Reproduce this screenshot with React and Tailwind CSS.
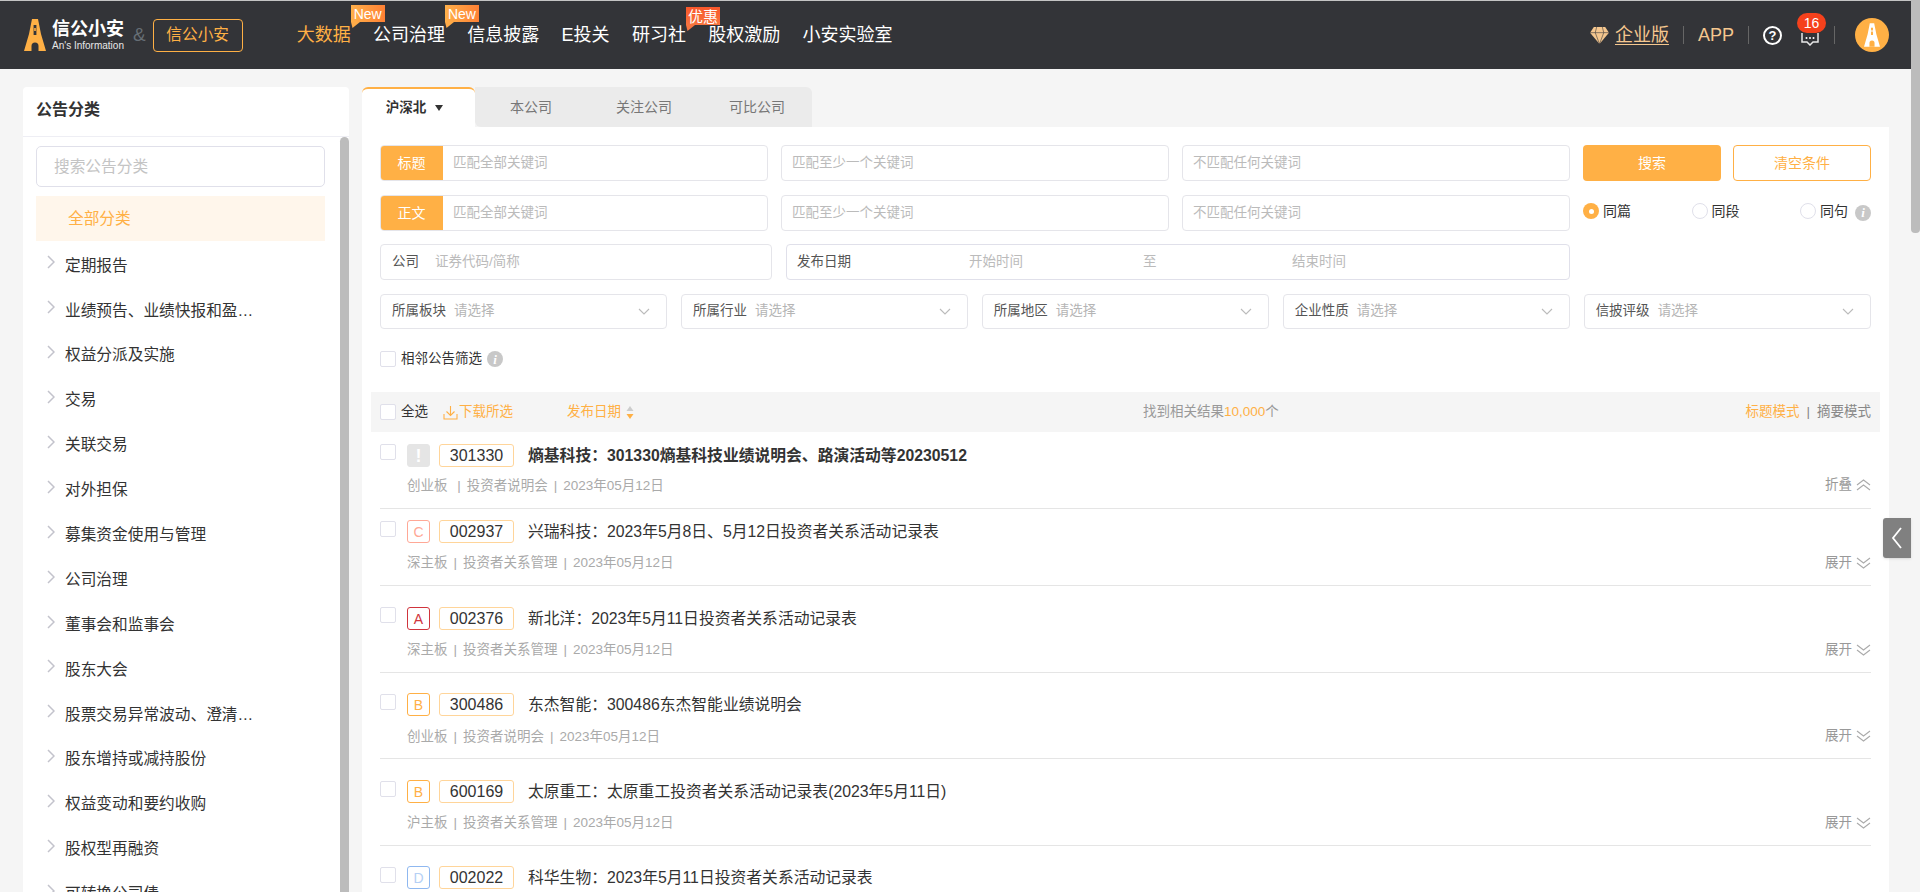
import React from "react";

function Logo({ className, fill = "#ffb045", cut = "#333438" }) {
  return (
    <svg viewBox="0 0 22 32" className={className}>
      <path fill={fill} d="M8 0h6l.8 4 2.2 11 5 17H0L5 15 7.2 4z" />
      <rect x="9.6" y="6" width="2.8" height="10" fill={cut} />
      <rect x="10.2" y="9" width="1.6" height="3" fill={fill} />
      <path fill={cut} d="M7.5 32v-5a3.5 3.5 0 0 1 7 0v5z" />
    </svg>
  );
}

function Badge({ children, red }) {
  return (
    <span
      className={`absolute right-[-34px] flex w-[34px] items-center justify-center leading-none text-white ${
        red
          ? "top-[-16px] h-[18px] bg-gradient-to-b from-[#f9572b] to-[#f8743f] text-[15px]"
          : "top-[-18px] h-[17px] bg-gradient-to-r from-[#ffb04a] to-[#ff8034] text-[14px]"
      }`}
    >
      {children}
      <svg viewBox="0 0 9 6" className="absolute bottom-[-6px] left-0 h-[6px] w-[9px]">
        <path d="M0 0h9L1.5 6z" fill={red ? "#f8743f" : "#ffab48"} />
      </svg>
    </span>
  );
}

function Nav() {
  const items = [
    ["大数据", "New"],
    ["公司治理", "New"],
    ["信息披露"],
    ["E投关"],
    ["研习社", "优惠"],
    ["股权激励"],
    ["小安实验室"],
  ];
  return (
    <nav className="ml-[54px] flex gap-[22.3px] text-[18px] leading-[24px]">
      {items.map(([t, b], i) => (
        <span key={t} className={`relative whitespace-nowrap ${i === 0 ? "text-[#ffb045]" : "text-white"}`}>
          {t}
          {b && <Badge red={b === "优惠"}>{b}</Badge>}
        </span>
      ))}
    </nav>
  );
}

function Header() {
  return (
    <header className="flex h-[69px] items-center border-t border-t-[#c4c4c4] bg-[#333438] pl-[24px] pr-[31px]">
      <Logo className="h-[32px] w-[22px] shrink-0" />
      <div className="ml-[6px] flex w-[73px] flex-col text-white">
        <span className="text-[18px] font-bold leading-[20px]">信公小安</span>
        <span className="mt-[1px] whitespace-nowrap text-[10px] leading-[11px] text-[#e8e8e8]">An's Information</span>
      </div>
      <span className="ml-[8px] text-[19px] text-[#666e75]">&amp;</span>
      <span className="ml-[7px] flex h-[33px] w-[90px] items-center justify-center rounded-[4px] border border-[#ffb045] text-[15.7px] text-[#ffb045]">
        信公小安
      </span>
      <Nav />
      <div className="ml-auto flex items-center text-[18px] text-[#f5c78f]">
        <svg viewBox="0 0 20 18" className="mr-[6px] h-[17px] w-[19px]">
          <path fill="#f5c78f" d="M4 0h12l4 6-10 12L0 6z" />
          <path fill="none" stroke="#333438" strokeWidth="0.6" d="M0 6h20M7 0 5.5 6 10 18l4.5-12L13 0" />
        </svg>
        <span className="underline underline-offset-[3px]">企业版</span>
        <span className="mx-[14px] h-[18px] w-px bg-[#666]" />
        <span>APP</span>
        <span className="mx-[14px] h-[18px] w-px bg-[#666]" />
        <span className="flex h-[19px] w-[19px] items-center justify-center rounded-full border-[2px] border-white text-[13px] font-bold leading-none text-white">?</span>
        <span className="relative ml-[19px] mt-[6px] block h-[13px] w-[18px]">
          <svg viewBox="0 0 18 14" className="h-[14px] w-[18px]">
            <path fill="none" stroke="#e8e8e8" strokeWidth="1.5" d="M1 1v9h5l3 3 3-3h5V1" />
            <circle cx="5.5" cy="6" r="1" fill="#fff" />
            <circle cx="9" cy="6" r="1" fill="#fff" />
            <circle cx="12.5" cy="6" r="1" fill="#fff" />
          </svg>
          <span className="absolute left-[-4px] top-[-19px] flex h-[20px] w-[29px] items-center justify-center rounded-full bg-[#f5411c] text-[14px] leading-none text-white">16</span>
        </span>
        <span className="ml-[15px] h-[18px] w-px bg-[#666]" />
        <span className="ml-[20px] flex h-[34px] w-[34px] items-center justify-center rounded-full bg-[#ffb045]">
          <Logo className="h-[24px] w-[16px]" fill="#fff" cut="#ffb045" />
        </span>
      </div>
    </header>
  );
}

const cats = [
  "定期报告",
  "业绩预告、业绩快报和盈…",
  "权益分派及实施",
  "交易",
  "关联交易",
  "对外担保",
  "募集资金使用与管理",
  "公司治理",
  "董事会和监事会",
  "股东大会",
  "股票交易异常波动、澄清…",
  "股东增持或减持股份",
  "权益变动和要约收购",
  "股权型再融资",
  "可转换公司债",
];

function Sidebar() {
  return (
    <aside className="ml-[23px] flex w-[326px] shrink-0 flex-col rounded-t-[4px] bg-white">
      <div className="flex h-[50px] shrink-0 items-center border-b border-[#eeeef4] pb-[3px] pl-[13px] text-[16px] font-bold leading-none text-[#333]">
        公告分类
      </div>
      <div className="relative flex-1 overflow-hidden pl-[13px] pr-[24px]">
        <span className="absolute bottom-0 right-0 top-0 w-[9px] rounded-t-[5px] bg-[#bcbcbc]" />
        <div className="mt-[9px] flex h-[41px] items-center rounded-[5px] border border-[#e0e0ea] pl-[17px] text-[15.7px] text-[#c4c4c4]">
          搜索公告分类
        </div>
        <div className="mt-[9px] flex h-[45px] items-center bg-[#fff6eb] pl-[32px] text-[15.7px] text-[#ffb045]">全部分类</div>
        <ul className="mt-[2px] text-[#333]">
          {cats.map((c) => (
            <li key={c} className="flex h-[44.9px] items-center pl-[11px] text-[15.7px]">
              <svg viewBox="0 0 8 14" className="mb-[6px] h-[14px] w-[8px] shrink-0" fill="none" stroke="#c3c3cc" strokeWidth="1.5">
                <path d="M1 1l6 6-6 6" />
              </svg>
              <span className="ml-[10px] whitespace-nowrap">{c}</span>
            </li>
          ))}
        </ul>
      </div>
    </aside>
  );
}

function Field({ text, className = "" }) {
  return (
    <div className={`flex h-[36px] items-center rounded-[4px] border border-[#e5e5ea] pl-[10px] text-[13.5px] text-[#bbb] ${className}`}>
      {text}
    </div>
  );
}

function Labeled({ label }) {
  return (
    <div className="flex h-[36px] w-[388px] overflow-hidden rounded-[4px] border border-[#e5e5ea]">
      <span className="-my-px -ml-px flex w-[63px] items-center justify-center rounded-l-[4px] bg-[#ffb045] text-[14px] text-white">{label}</span>
      <span className="ml-[10px] flex items-center text-[13.5px] text-[#bbb]">匹配全部关键词</span>
    </div>
  );
}

function Radio({ text, on, className = "" }) {
  return (
    <span className={`flex items-center whitespace-nowrap text-[14px] text-[#333] ${className}`}>
      {on ? (
        <span className="mr-[4px] flex h-[16px] w-[16px] items-center justify-center rounded-full bg-[#ffb045]">
          <span className="h-[5px] w-[5px] rounded-full bg-white" />
        </span>
      ) : (
        <span className="mr-[4px] h-[16px] w-[16px] rounded-full border border-[#e0e0ea]" />
      )}
      {text}
    </span>
  );
}

function Info({ className = "" }) {
  return (
    <span className={`flex h-[16px] w-[16px] shrink-0 items-center justify-center rounded-full bg-[#c8c8c8] font-[Liberation_Serif,serif] text-[13px] font-bold italic leading-none text-white ${className}`}>
      i
    </span>
  );
}

function Select({ label }) {
  return (
    <div className="flex h-[35px] flex-1 items-center rounded-[4px] border border-[#e5e5ea] pl-[11px] pr-[16px] text-[13.5px]">
      <span className="text-[#555]">{label}</span>
      <span className="ml-[8px] text-[#b5b5b5]">请选择</span>
      <svg viewBox="0 0 12 7" className="ml-auto h-[7px] w-[12px]" fill="none" stroke="#bbb" strokeWidth="1.1">
        <path d="M1 1l5 5 5-5" />
      </svg>
    </div>
  );
}

function Filters() {
  return (
    <div className="px-[18px] pt-[18px]">
      <div className="flex gap-[13px]">
        <Labeled label="标题" />
        <Field text="匹配至少一个关键词" className="w-[388px]" />
        <Field text="不匹配任何关键词" className="w-[388px]" />
        <button className="h-[36px] w-[138px] rounded-[4px] bg-[#ffb045] text-[14px] text-white">搜索</button>
        <button className="-ml-px h-[36px] w-[138px] rounded-[4px] border border-[#ffb045] text-[14px] text-[#ffb045]">清空条件</button>
      </div>
      <div className="mt-[14px] flex gap-[13px]">
        <Labeled label="正文" />
        <Field text="匹配至少一个关键词" className="w-[388px]" />
        <Field text="不匹配任何关键词" className="w-[388px]" />
        <div className="flex h-[36px] w-[288px] items-center pb-[4px]">
          <Radio text="同篇" on className="w-[109px]" />
          <Radio text="同段" className="w-[109px]" />
          <Radio text="同句" />
          <Info className="ml-[7px] mt-[3px]" />
        </div>
      </div>
      <div className="mt-[13px] flex gap-[14px]">
        <div className="flex h-[36px] w-[392px] items-center rounded-[4px] border border-[#e5e5ea] pl-[11px] text-[13.5px]">
          <span className="text-[#555]">公司</span>
          <span className="ml-[16px] text-[#bbb]">证券代码/简称</span>
        </div>
        <div className="relative flex h-[36px] w-[784px] items-center rounded-[4px] border border-[#e0e0ea] pl-[10px] text-[13.5px] text-[#bbb]">
          <span className="text-[#555]">发布日期</span>
          <span className="absolute left-[182px]">开始时间</span>
          <span className="absolute left-[356px]">至</span>
          <span className="absolute left-[505px]">结束时间</span>
        </div>
      </div>
      <div className="mt-[14px] flex gap-[13.5px]">
        {["所属板块", "所属行业", "所属地区", "企业性质", "信披评级"].map((l) => (
          <Select key={l} label={l} />
        ))}
      </div>
      <div className="mt-[20px] flex h-[20px] items-center text-[13.5px] text-[#333]">
        <span className="h-[16px] w-[16px] rounded-[2px] border border-[#e0e0ea]" />
        <span className="ml-[5px]">相邻公告筛选</span>
        <Info className="ml-[5px]" />
      </div>
    </div>
  );
}

function Toolbar() {
  return (
    <div className="relative mx-[9px] mt-[23px] flex h-[40px] items-center bg-[#f5f5f5] px-[9px] text-[13.5px]">
      <span className="h-[16px] w-[16px] rounded-[2px] border border-[#e0e0ea] bg-white" />
      <span className="ml-[5px] text-[#333]">全选</span>
      <svg viewBox="0 0 15 15" className="ml-[15px] h-[15px] w-[15px]" fill="none" stroke="#ffb045" strokeWidth="1.1">
        <path d="M7.5 1v9M3.5 6.5l4 4 4-4M1 9v5h13V9" />
      </svg>
      <span className="ml-px text-[#ffb045]">下载所选</span>
      <span className="ml-[54px] text-[#ffb045]">发布日期</span>
      <svg viewBox="0 0 8 13" className="ml-[5px] h-[13px] w-[8px]">
        <path d="M4 0l3.5 5h-7z" fill="#ccc" />
        <path d="M4 13l3.5-5h-7z" fill="#ffb045" />
      </svg>
      <span className="absolute left-[772px] text-[#999]">
        找到相关结果<span className="text-[#ffb045]">10,000</span>个
      </span>
      <span className="ml-auto text-[#ffb045]">标题模式</span>
      <span className="mx-[7px] text-[#888]">|</span>
      <span className="text-[#888]">摘要模式</span>
    </div>
  );
}

const rows = [
  { g: "!", gc: "border-[#e5e5e5] bg-[#e5e5e5] text-[18px] font-bold text-white", code: "301330", t: "熵基科技：301330熵基科技业绩说明会、路演活动等20230512", m: ["创业板 ", "投资者说明会", "2023年05月12日"], bold: true, h: "h-[77px]", pt: "pt-[12px]", mt: "mt-[8px]", cm: "mt-0" },
  { g: "C", gc: "border-[#ffa896] text-[#ffa896]", code: "002937", t: "兴瑞科技：2023年5月8日、5月12日投资者关系活动记录表", m: ["深主板", "投资者关系管理", "2023年05月12日"], h: "h-[77px]", pt: "pt-[11px]", mt: "mt-[9px]", cm: "mt-[1px]" },
  { g: "A", gc: "border-[#d0343c] text-[#d0343c]", code: "002376", t: "新北洋：2023年5月11日投资者关系活动记录表", m: ["深主板", "投资者关系管理", "2023年05月12日"], h: "h-[87px]", pt: "pt-[21px]", mt: "mt-[9px]", cm: "mt-0" },
  { g: "B", gc: "border-[#ffb045] text-[#ffb045]", code: "300486", t: "东杰智能：300486东杰智能业绩说明会", m: ["创业板", "投资者说明会", "2023年05月12日"], h: "h-[86px]", pt: "pt-[20px]", mt: "mt-[10px]", cm: "mt-[1px]" },
  { g: "B", gc: "border-[#ffb045] text-[#ffb045]", code: "600169", t: "太原重工：太原重工投资者关系活动记录表(2023年5月11日)", m: ["沪主板", "投资者关系管理", "2023年05月12日"], h: "h-[87px]", pt: "pt-[21px]", mt: "mt-[9px]", cm: "mt-[1px]" },
  { g: "D", gc: "border-[#8fb8f0] text-[#b5d0f5]", code: "002022", t: "科华生物：2023年5月11日投资者关系活动记录表", m: null, h: "h-[87px]", pt: "pt-[20px]", mt: "mt-[8px]", cm: "mt-[1px]" },
];

function Row({ r, i }) {
  return (
    <div className={`relative mx-[18px] ${r.h} ${r.pt} border-b border-[#e5e5e5] last:border-b-0`}>
      <div className="flex items-start">
        <span className={`${r.cm} h-[16px] w-[16px] rounded-[2px] border border-[#e0e0ea]`} />
        <span className={`ml-[11px] flex h-[23px] w-[23px] items-center justify-center rounded-[3px] border text-[14px] leading-none ${r.gc}`}>{r.g}</span>
        <span className="ml-[9px] flex h-[23px] w-[75px] items-center justify-center rounded-[3px] border border-[#ffd59a] text-[16px] leading-none text-[#333]">{r.code}</span>
        <span className={`ml-[14px] text-[15.8px] leading-[24px] text-[#333] ${r.bold ? "font-bold" : ""}`}>{r.t}</span>
      </div>
      {r.m && (
        <div className={`${r.mt} ml-[27px] flex whitespace-pre text-[13.5px] leading-[20px] text-[#aaa]`}>
          <span>{r.m[0]}</span>
          <span className="mx-[6px]">|</span>
          <span>{r.m[1]}</span>
          <span className="mx-[6px]">|</span>
          <span>{r.m[2]}</span>
        </div>
      )}
      {r.m && (
        <div className={`absolute right-0 flex items-center text-[13.5px] leading-[20px] text-[#999] ${i === 0 ? "bottom-[13px]" : "bottom-[12px]"}`}>
          {i === 0 ? "折叠" : "展开"}
          <svg viewBox="0 0 15 12" className="ml-[4px] h-[12px] w-[15px]" fill="none" stroke="#aaa" strokeWidth="1.1">
            {i === 0 ? <path d="M1 6l6.5-5L14 6M1 11l6.5-5 6.5 5" /> : <path d="M1 1l6.5 5L14 1M1 6l6.5 5L14 6" />}
          </svg>
        </div>
      )}
    </div>
  );
}

function Main() {
  return (
    <main className="ml-[13px] flex w-[1527px] shrink-0 flex-col">
      <div className="flex h-[40px] shrink-0 text-[14px]">
        <div className="flex w-[113px] items-center justify-center rounded-t-[6px] border-t-2 border-[#ffb045] bg-white pr-[8px] text-[13.5px] font-bold text-[#333]">
          沪深北
          <svg viewBox="0 0 8 6" className="ml-[9px] h-[6px] w-[8px]">
            <path d="M0 0h8L4 6z" fill="#333" />
          </svg>
        </div>
        <div className="flex w-[337px] items-center rounded-tr-[6px] rounded-bl-[6px] bg-[#ebebeb] text-[#777]">
          <span className="ml-[35px]">本公司</span>
          <span className="ml-[64px]">关注公司</span>
          <span className="ml-[57px]">可比公司</span>
        </div>
      </div>
      <div className="flex-1 overflow-hidden bg-white">
        <Filters />
        <Toolbar />
        {rows.map((r, i) => (
          <Row key={r.code} r={r} i={i} />
        ))}
      </div>
    </main>
  );
}

export default function App() {
  return (
    <div className="relative h-[892px] w-[1920px] overflow-hidden bg-[#f5f5f5] font-[Liberation_Sans,Noto_Sans_CJK_SC,sans-serif] text-[14px]">
      <Header />
      <div className="mt-[18px] flex h-[805px] overflow-hidden">
        <Sidebar />
        <Main />
      </div>
      <div className="absolute bottom-0 right-0 top-0 w-[9px] bg-[#f5f5f5]">
        <div className="h-[233px] rounded-b-[4px] bg-[#bcbcbc]" />
      </div>
      <div className="absolute left-[1883px] top-[518px] flex h-[40px] w-[28px] items-center justify-center rounded-l-[3px] bg-[#808080] shadow-sm">
        <svg viewBox="0 0 12 24" className="h-[24px] w-[12px]" fill="none" stroke="#fff" strokeWidth="1.8">
          <path d="M10 2 2 12l8 10" />
        </svg>
      </div>
    </div>
  );
}
